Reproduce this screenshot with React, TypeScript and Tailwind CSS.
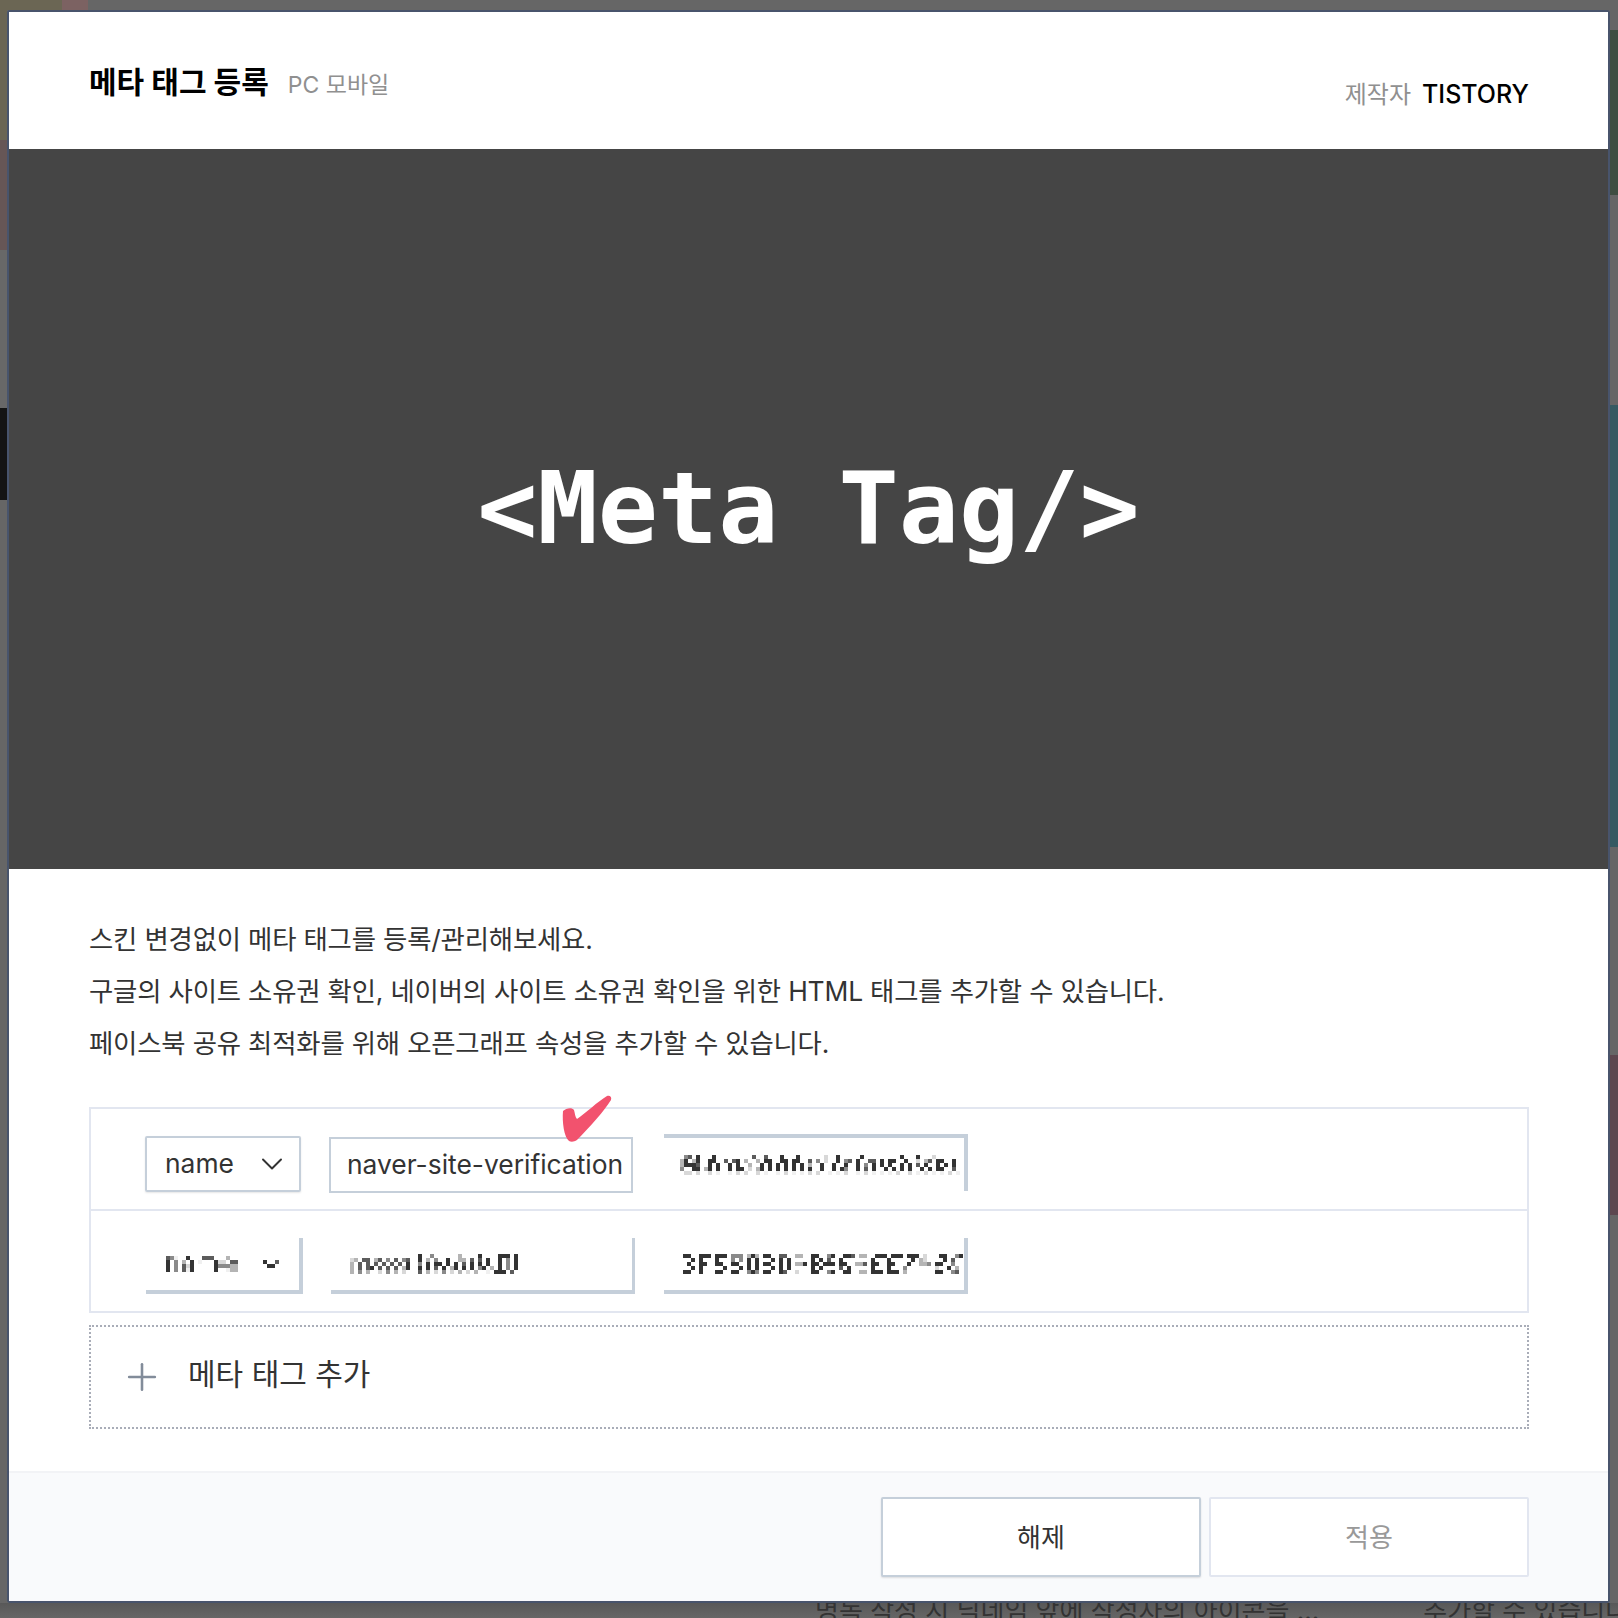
import { ChevronDown, Plus } from "lucide-react";

const KR = "font-['Inter','Noto_Sans_CJK_KR',sans-serif]";

const SHADES: Record<string, string> = {
  "1": "#f0f0f0",
  "2": "#d8d8d8",
  "3": "#b4b4b4",
  "4": "#8a8a8a",
  "5": "#5c5c5c",
  "6": "#333333",
};

// each row of digits is one row of mosaic blocks
function Mosaic({ rows, size = 4 }: { rows: string[]; size?: number }) {
  const w = Math.max(...rows.map((r) => r.length)) * size;
  return (
    <svg width={w} height={rows.length * size} className="block shrink-0" shapeRendering="crispEdges">
      {rows.flatMap((row, y) =>
        row.split("").map((c, x) =>
          SHADES[c] ? <rect key={`${x}-${y}`} x={x * size} y={y * size} width={size} height={size} fill={SHADES[c]} /> : null,
        ),
      )}
    </svg>
  );
}

const CONTENT_1 = [
  " 45 6   6         5  5   6   6      2  6     6         6   6   2       ",
  "36 36  66  5 56 3  3 66  66 66  5 4 2  6 45 6  55 6 66  6  2 35 66  6 ",
  "36665  6 6  6 6  3  6 6 6 6 6 6 3  6  6  6  6 4 6 6 6  6 6 5 6  6 6 6 ",
  "4  66 36 6  6 66 2 36 6 6 6 6 6 6  6  6 64  6 5 6  6 6 6 6  6 6 66  5 ",
  " 22 2  2 1  1 2 2  2 1  1 2 1 1 2 2  1 1 2  1 2 1 1 1 2  2 1 2 1 1 2 1",
];

const CONTENT_2 = [
  "66  666 666 444 363 66  55  33  66  46  665 33  666 666 666 2   66  46",
  "  6 6   6   4 4 6 6   6 6 6     6 6 5  6       6   6     6 32    6 5 ",
  " 6  66  66  66  6 6 66  6 6 336 66 666 66  335 66  66   6  334 66  4 ",
  "  6 6     6   6 6 6   6 6 6     6 6    5 6     6   6   4       2  6 3",
  "66  6   66  66  464 66  65  2   66  46  66  33 666 666 3       66  45",
];

const NAME_2 = [
  "541  6   555   3  ",
  "6 4 3 6 1   622 55",
  "6 4 526     644433",
  "6 4 516     6  133",
];

const ARROW_2 = [
  "6  5",
  " 66 ",
];

const KEY_2 = [
  "                  6  4      3    6    666 6 ",
  " 23 55 35 4 5 45  6 3 4  6  33 5 5 6  6 4 6 ",
  " 3 5 5 5 5 5 5 6  4 6 66 6 6 5 6 6 6  6 4 6 ",
  " 3 5 56 5 5 5 36  6 6 5 6 36 6 6 46 3 6 4 6 ",
  " 3 4 3  2 4 3 2   5 3 2 4 2 3 2 3  1 666 5  ",
];

function Field({ className, children }: { className: string; children: React.ReactNode }) {
  return <div className={`flex items-center overflow-hidden ${className}`}>{children}</div>;
}

export default function App() {
  return (
    <div className={`${KR} flex h-[1618px] w-[1618px] flex-col overflow-hidden bg-[#666666]`}>
      {/* dimmed page behind the dialog */}
      <div className="flex h-[10px] shrink-0">
        <div className="h-full w-[62px] bg-[#6b6654]" />
        <div className="h-full w-[26px] bg-[#7c6262]" />
      </div>

      <div className="flex min-h-0 flex-1">
        <div className="flex w-[7px] shrink-0 flex-col">
          <div className="h-[130px] bg-[#6a6553]" />
          <div className="h-[110px] bg-[#665656]" />
          <div className="h-[158px] bg-[#686868]" />
          <div className="h-[92px] bg-[#141414]" />
          <div className="flex-1 bg-[#666666]" />
        </div>

        <div className="flex w-[1603px] shrink-0 flex-col rounded-[3px] border-2 border-[#48546c] bg-white">
          <header className="flex h-[137px] shrink-0 items-start justify-between bg-white pl-[80px] pr-[79px]">
            <div className="mt-[48px] flex items-baseline">
              <h1 className="text-[30px] leading-[44px] font-bold text-black">메타 태그 등록</h1>
              <span className="ml-[19px] text-[23px] text-[#909090]">PC 모바일</span>
            </div>
            <div className="mt-[64px] flex items-baseline">
              <span className="text-[24px] leading-[36px] text-[#909090]">제작자</span>
              <span className="ml-[11px] text-[25px] leading-[36px] font-medium text-black">TISTORY</span>
            </div>
          </header>

          <div className="flex h-[720px] shrink-0 items-center justify-center bg-[#454545]">
            <span className="font-['DejaVu_Sans_Mono',monospace] text-[100px] font-bold text-white">&lt;Meta Tag/&gt;</span>
          </div>

          <section className="flex-1 pl-[80px] pr-[79px] pt-[44px]">
            <div className="text-[26.4px] leading-[52px] tracking-[-0.18px] text-[#333333]">
              <p>스킨 변경없이 메타 태그를 등록/관리해보세요.</p>
              <p>구글의 사이트 소유권 확인, 네이버의 사이트 소유권 확인을 위한 HTML 태그를 추가할 수 있습니다.</p>
              <p>페이스북 공유 최적화를 위해 오픈그래프 속성을 추가할 수 있습니다.</p>
            </div>

            <div className="mt-[38px] border-2 border-[#e2e6f0]">
              <div className="relative flex h-[102px] items-start border-b-2 border-[#e2e6f0] pl-[54px]">
                <Field className="mt-[27px] h-[56px] w-[156px] justify-between rounded-[2px] border-2 border-[#c5cfda] pl-[18px] pr-[9px] shadow-[0_1px_2px_rgba(0,0,0,0.1)]">
                  <span className="text-[26.4px] text-[#333333]">name</span>
                  <ChevronDown size={36} strokeWidth={1.3} className="shrink-0 text-[#333333]" />
                </Field>
                <Field className="ml-[28px] mt-[28px] h-[56px] w-[304px] border-2 border-[#c5cfda] pl-[16px]">
                  <span className="text-[26.4px] whitespace-nowrap text-[#333333]">naver-site-verification</span>
                </Field>
                <Field className="ml-[31px] mt-[25px] h-[57px] w-[304px] border-t-[4px] border-r-[4px] border-[#c5cfda] pl-[16px]">
                  <Mosaic rows={CONTENT_1} />
                </Field>
                {/* hand-drawn check over the field */}
                <svg width="54" height="50" viewBox="0 0 54 50" className="absolute left-[468px] top-[-15px]">
                  <path
                    d="M4 17c3-3 9-4 11-1 1 3 1 7 3 9C28 18 38 8 48 2c3-1 5 1 4 4C46 16 30 34 18 46c-3 2-6 2-8 1C5 43 3 28 4 17z"
                    fill="#f2526e"
                  />
                </svg>
              </div>
              <div className="flex h-[100px] items-start pl-[55px]">
                <Field className="mt-[27px] h-[56px] w-[157px] justify-between border-r-[4px] border-b-[4px] border-[#c5cfda] pl-[20px] pr-[20px]">
                  <Mosaic rows={NAME_2} />
                  <Mosaic rows={ARROW_2} />
                </Field>
                <Field className="ml-[28px] mt-[27px] h-[56px] w-[304px] border-r-[3px] border-b-[4px] border-[#c5cfda] pl-[15px]">
                  <Mosaic rows={KEY_2} />
                </Field>
                <Field className="ml-[29px] mt-[27px] h-[56px] w-[304px] border-r-[4px] border-b-[4px] border-[#c5cfda] pl-[19px]">
                  <Mosaic rows={CONTENT_2} />
                </Field>
              </div>
            </div>

            <button className="mt-[12px] flex h-[104px] w-full items-center border-2 border-dotted border-[#a9adb8] pl-[29px] text-left">
              <Plus size={44} strokeWidth={1.4} className="text-[#828c9a]" />
              <span className="ml-[24px] pb-[6px] text-[30px] leading-[40px] text-[#333333]">메타 태그 추가</span>
            </button>
          </section>

          <footer className="flex h-[130px] shrink-0 justify-end gap-[8px] border-t-2 border-[#f2f3f6] bg-[#f9fafc] pt-[24px] pr-[79px]">
            <button className="h-[80px] w-[320px] rounded-[2px] border-2 border-[#c5cfda] bg-white text-[26px] text-[#333333] shadow-[0_1px_2px_rgba(0,0,0,0.12)]">해제</button>
            <button className="h-[80px] w-[320px] rounded-[2px] border-2 border-[#e2e6f0] bg-white text-[26px] text-[#999999]">적용</button>
          </footer>
        </div>

        <div className="flex min-w-0 flex-1 flex-col">
          <div className="h-[20px]" />
          <div className="h-[165px] bg-[#3f4e42]" />
          <div className="h-[210px] bg-[#666666]" />
          <div className="h-[442px] bg-[#355a62]" />
          <div className="h-[208px] bg-[#666666]" />
          <div className="h-[160px] bg-[#5d474f]" />
          <div className="flex-1 bg-[#666666]" />
        </div>
      </div>

      <div className="h-[15px] shrink-0 overflow-hidden bg-gradient-to-b from-[#585858] to-[#666666]">
        <div className="-mt-[10px] flex text-[26px] leading-[36px] text-[#333333]">
          <span className="ml-[815px] whitespace-nowrap">명독 작성 시 닉네임 앞에 작성자의 아이콘을 ...</span>
          <span className="ml-[104px] whitespace-nowrap">추가할 수 있습니다</span>
        </div>
      </div>
    </div>
  );
}
